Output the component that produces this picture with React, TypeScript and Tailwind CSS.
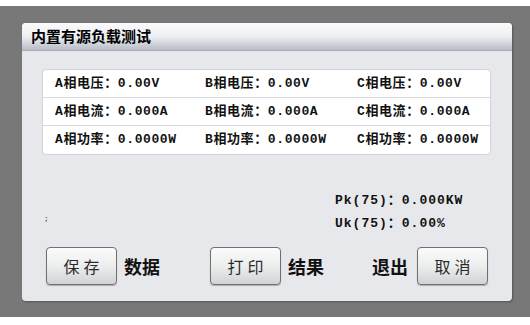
import React from 'react'

const MONO = "font-['Liberation_Mono','Noto_Sans_CJK_SC',monospace]"
const SANS = "font-['Noto_Sans_CJK_SC','Liberation_Sans',sans-serif]"

const rows = [
  ['电压', '0.00V'],
  ['电流', '0.000A'],
  ['功率', '0.0000W'],
]

const colWidths = ['w-[150px]', 'w-[152px]', 'w-[120px]']

function Button({ label }: { label: string }) {
  return (
    <button
      className={`${SANS} w-[71px] h-[38px] rounded-[4px] border border-[#6f7073] bg-gradient-to-b from-[#fbfbfc] via-[#eceded] to-[#d2d3d6] text-[16px] text-[#2a2a2a] tracking-[4px] pl-[4px] shadow-[0_1px_1px_rgba(0,0,0,0.25)]`}
    >
      {label}
    </button>
  )
}

export default function App() {
  return (
    <div className="w-[530px] h-[325px] bg-white pt-[6px]">
      <div className="h-[311px] bg-[#787878] pl-[22px] pt-[17px]">
        <div className="w-[490px] h-[278px] rounded-[4px] bg-[#e7e8eb] overflow-hidden shadow-[1px_1px_2px_rgba(0,0,0,0.3)]">
          <div className="h-[28px] bg-gradient-to-b from-[#fbfbfd] via-[#eeeff3] to-[#b9bcc6] flex items-center pl-[9px] border-b border-[#a9acb4]">
            <span className={`${SANS} text-[15px] font-bold text-black`}>内置有源负载测试</span>
          </div>
          <div className="px-[20px] pt-[18px]">
            <div className="w-[449px] bg-white rounded-[4px] border border-[#d2d3d7]">
              {rows.map(([name, val], i) => (
                <div
                  key={name}
                  className={`h-[28px] flex items-center pl-[12px] ${MONO} text-[13px] tracking-[0.6px] font-bold text-[#111] ${i < 2 ? 'border-b border-[#d9dade]' : ''}`}
                >
                  {['A', 'B', 'C'].map((p, j) => (
                    <span key={p} className={`${colWidths[j]} shrink-0 whitespace-nowrap`}>
                      {p}相{name}：{val}
                    </span>
                  ))}
                </div>
              ))}
            </div>
            <div className="flex mt-[34px] h-[42px]">
              <span className={`${MONO} text-[8px] text-[#333] w-[293px] pt-[24px] pl-[2px]`}>;</span>
              <div className={`${MONO} text-[13px] tracking-[1px] font-bold text-[#111] leading-[23px]`}>
                <div>Pk(75)：0.000KW</div>
                <div>Uk(75)：0.00%</div>
              </div>
            </div>
            <div className="flex items-center mt-[16px] pl-[4px]">
              <Button label="保存" />
              <span className={`${SANS} text-[18px] font-bold text-[#111] ml-[7px] w-[86px]`}>数据</span>
              <Button label="打印" />
              <span className={`${SANS} text-[18px] font-bold text-[#111] ml-[7px] w-[84px]`}>结果</span>
              <span className={`${SANS} text-[18px] font-bold text-[#111] w-[45px]`}>退出</span>
              <Button label="取消" />
            </div>
          </div>
        </div>
      </div>
    </div>
  )
}
